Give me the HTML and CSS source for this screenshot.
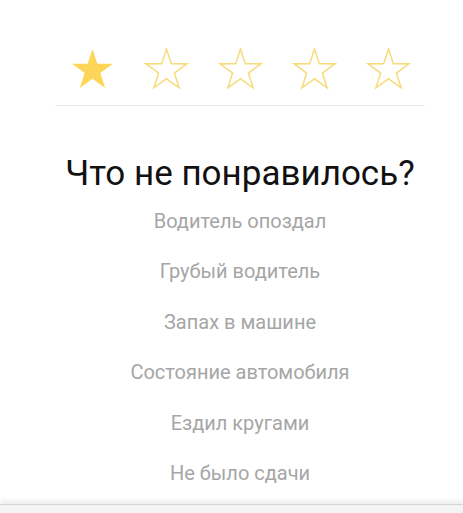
FILE: index.html
```html
<!DOCTYPE html>
<html lang="ru">
<head>
<meta charset="utf-8">
<link rel="stylesheet" href="styles.css">
</head>
<body>
<div class="page">
  <div class="stars">
    <svg class="star" viewBox="0 0 44 44"><polygon class="full" points="22,1 26.76,15.45 41.97,15.51 29.7,24.5 34.34,38.99 22,30.1 9.66,38.99 14.3,24.5 2.03,15.51 17.24,15.45"/></svg>
    <svg class="star" viewBox="0 0 44 44"><polygon class="empty" points="22,1 26.76,15.45 41.97,15.51 29.7,24.5 34.34,38.99 22,30.1 9.66,38.99 14.3,24.5 2.03,15.51 17.24,15.45"/></svg>
    <svg class="star" viewBox="0 0 44 44"><polygon class="empty" points="22,1 26.76,15.45 41.97,15.51 29.7,24.5 34.34,38.99 22,30.1 9.66,38.99 14.3,24.5 2.03,15.51 17.24,15.45"/></svg>
    <svg class="star" viewBox="0 0 44 44"><polygon class="empty" points="22,1 26.76,15.45 41.97,15.51 29.7,24.5 34.34,38.99 22,30.1 9.66,38.99 14.3,24.5 2.03,15.51 17.24,15.45"/></svg>
    <svg class="star" viewBox="0 0 44 44"><polygon class="empty" points="22,1 26.76,15.45 41.97,15.51 29.7,24.5 34.34,38.99 22,30.1 9.66,38.99 14.3,24.5 2.03,15.51 17.24,15.45"/></svg>
  </div>
  <div class="divider"></div>
  <h1 class="title">Что не понравилось?</h1>
  <ul class="options">
    <li>Водитель опоздал</li>
    <li>Грубый водитель</li>
    <li>Запах в машине</li>
    <li>Состояние автомобиля</li>
    <li>Ездил кругами</li>
    <li>Не было сдачи</li>
  </ul>
</div>
<div class="bottom"></div>
</body>
</html>
```
FILE: styles.css
```css
html, body {
  margin: 0;
  padding: 0;
  background: #ffffff;
}
body {
  font-family: Roboto, "Noto Sans", sans-serif;
  overflow: hidden;
  height: 513px;
  display: flex;
  flex-direction: column;
}
.page {
  width: 370px;
  margin-left: 55px;
  flex: 1;
}
.stars {
  display: flex;
  justify-content: center;
  gap: 29px;
  padding-top: 48px;
}
.star {
  width: 45px;
  height: 45px;
  display: block;
}
.full {
  fill: #fdd659;
}
.empty {
  fill: none;
  stroke: #f7dc7e;
  stroke-width: 1.5;
  stroke-linejoin: miter;
}
.divider {
  height: 1px;
  background: #ebebeb;
  margin-top: 12px;
}
.title {
  margin: 47px -20px 0;
  font-size: 35px;
  line-height: 41px;
  font-weight: 400;
  color: #111111;
  text-align: center;
  white-space: nowrap;
}
.options {
  list-style: none;
  margin: 2px 0 0;
  padding: 0;
}
.options li {
  text-align: center;
  font-size: 20px;
  line-height: 50.4px;
  color: #a6a6a6;
}
.bottom {
  height: 8px;
  background: #f4f4f4;
  border-top: 1px solid #d4d4d4;
  box-shadow: 0 -3px 5px rgba(0, 0, 0, 0.08);
}
```
